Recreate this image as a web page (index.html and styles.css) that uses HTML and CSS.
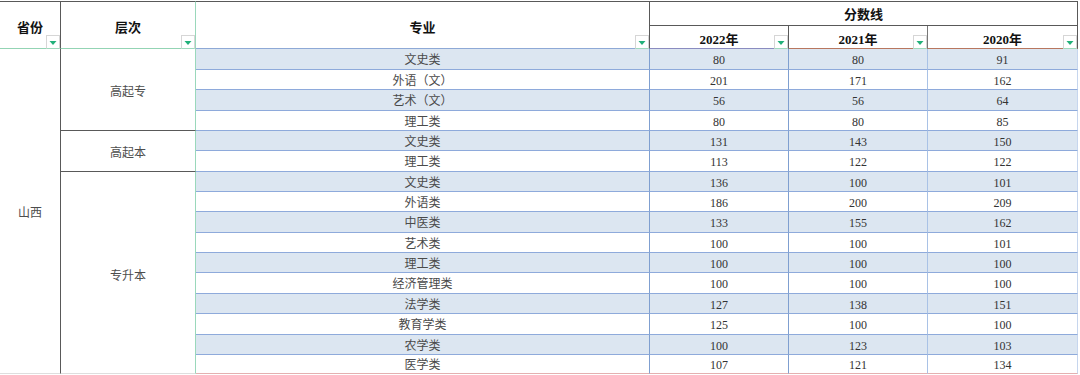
FILE: index.html
```html
<!DOCTYPE html>
<html lang="zh-CN">
<head>
<meta charset="utf-8">
<title>分数线</title>
<link rel="stylesheet" href="styles.css">
</head>
<body>
<div class="sheet">
  <div class="cell h h-prov">省份<span class="flt"><svg viewBox="0 0 12 12" width="12" height="12"><polygon points="2.5,5 9.5,5 6,9" fill="#22b07a"/></svg></span></div>
  <div class="cell h h-lvl">层次<span class="flt"><svg viewBox="0 0 12 12" width="12" height="12"><polygon points="2.5,5 9.5,5 6,9" fill="#22b07a"/></svg></span></div>
  <div class="cell h h-subj">专业<span class="flt"><svg viewBox="0 0 12 12" width="12" height="12"><polygon points="2.5,5 9.5,5 6,9" fill="#22b07a"/></svg></span></div>
  <div class="cell h h-score">分数线</div>
  <div class="cell h h-year y22">2022年<span class="flt"><svg viewBox="0 0 12 12" width="12" height="12"><polygon points="2.5,5 9.5,5 6,9" fill="#22b07a"/></svg></span></div>
  <div class="cell h h-year y21">2021年<span class="flt"><svg viewBox="0 0 12 12" width="12" height="12"><polygon points="2.5,5 9.5,5 6,9" fill="#22b07a"/></svg></span></div>
  <div class="cell h h-year y20">2020年<span class="flt"><svg viewBox="0 0 12 12" width="12" height="12"><polygon points="2.5,5 9.5,5 6,9" fill="#22b07a"/></svg></span></div>

  <div class="cell prov">山西</div>
  <div class="cell lvl span4">高起专</div>
  <div class="cell subj sh">文史类</div><div class="cell n c4 sh">80</div><div class="cell n c5 sh">80</div><div class="cell n c6 sh">91</div>
  <div class="cell subj">外语（文）</div><div class="cell n c4">201</div><div class="cell n c5">171</div><div class="cell n c6">162</div>
  <div class="cell subj sh">艺术（文）</div><div class="cell n c4 sh">56</div><div class="cell n c5 sh">56</div><div class="cell n c6 sh">64</div>
  <div class="cell subj">理工类</div><div class="cell n c4">80</div><div class="cell n c5">80</div><div class="cell n c6">85</div>
  <div class="cell lvl span2">高起本</div>
  <div class="cell subj sh">文史类</div><div class="cell n c4 sh">131</div><div class="cell n c5 sh">143</div><div class="cell n c6 sh">150</div>
  <div class="cell subj">理工类</div><div class="cell n c4">113</div><div class="cell n c5">122</div><div class="cell n c6">122</div>
  <div class="cell lvl span10 last">专升本</div>
  <div class="cell subj sh">文史类</div><div class="cell n c4 sh">136</div><div class="cell n c5 sh">100</div><div class="cell n c6 sh">101</div>
  <div class="cell subj">外语类</div><div class="cell n c4">186</div><div class="cell n c5">200</div><div class="cell n c6">209</div>
  <div class="cell subj sh">中医类</div><div class="cell n c4 sh">133</div><div class="cell n c5 sh">155</div><div class="cell n c6 sh">162</div>
  <div class="cell subj">艺术类</div><div class="cell n c4">100</div><div class="cell n c5">100</div><div class="cell n c6">101</div>
  <div class="cell subj sh">理工类</div><div class="cell n c4 sh">100</div><div class="cell n c5 sh">100</div><div class="cell n c6 sh">100</div>
  <div class="cell subj">经济管理类</div><div class="cell n c4">100</div><div class="cell n c5">100</div><div class="cell n c6">100</div>
  <div class="cell subj sh">法学类</div><div class="cell n c4 sh">127</div><div class="cell n c5 sh">138</div><div class="cell n c6 sh">151</div>
  <div class="cell subj">教育学类</div><div class="cell n c4">125</div><div class="cell n c5">100</div><div class="cell n c6">100</div>
  <div class="cell subj sh">农学类</div><div class="cell n c4 sh">100</div><div class="cell n c5 sh">123</div><div class="cell n c6 sh">103</div>
  <div class="cell subj lastrow">医学类</div><div class="cell n c4 lastrow">107</div><div class="cell n c5 lastrow">121</div><div class="cell n c6 lastrow">134</div>
</div>
</body>
</html>
```

FILE: styles.css
```css
html, body {
  margin: 0;
  padding: 0;
  background: #ffffff;
}

body {
  padding-top: 1px;
  font-family: "Liberation Serif", "Noto Sans CJK SC", serif;
  font-size: 12px;
  color: #3a3a3a;
}

.sheet {
  display: grid;
  grid-template-columns: 61px 135px 454px 139px 139px 150px;
  grid-template-rows: 25px 23px 21px 20px 21px 20px 20px 21px 20px 20px 21px 20px 20px 21px 20px 21px 20px 19px;
  width: 1078px;
}

.cell {
  box-sizing: border-box;
  display: flex;
  align-items: center;
  justify-content: center;
  position: relative;
  line-height: 14px;
  white-space: nowrap;
}

/* header */
.h {
  font-weight: bold;
  font-size: 13px;
  color: #111111;
  background: #ffffff;
}

.h-prov {
  grid-row: span 2;
  border-top: 1px solid #595959;
  border-right: 1px solid #595959;
  border-bottom: 1px solid #93d4b4;
  padding-top: 5px;
}

.h-lvl {
  grid-row: span 2;
  border-top: 1px solid #595959;
  border-right: 1px solid #9ad8bb;
  border-bottom: 1px solid #93d4b4;
  padding-top: 5px;
}

.h-subj {
  grid-row: span 2;
  border-top: 1px solid #595959;
  border-right: 1px solid #595959;
  border-bottom: 1px solid #8ea9d6;
  padding-top: 5px;
}

.h-score {
  grid-column: span 3;
  border-top: 1px solid #595959;
  border-right: 1px solid #595959;
  border-bottom: 1px solid #595959;
  padding-top: 2px;
}

.h-year {
  padding-top: 5px;
  border-right: 1px solid #595959;
}

.y22 { border-bottom: 1px solid #8a8cc0; }
.y21 { border-bottom: 1px solid #b8775f; border-right-color: #777777; }
.y20 { border-bottom: 1px solid #b8775f; }

.flt {
  position: absolute;
  right: 0;
  bottom: -1px;
  width: 14px;
  height: 14px;
  box-sizing: border-box;
  border: 1px solid #d6d6d6;
  border-bottom-color: #9ed9bc;
  background: #ffffff;
  display: flex;
  align-items: center;
  justify-content: center;
}

.flt svg {
  display: block;
}

/* body */
.prov {
  grid-row: span 16;
  border-right: 1px solid #595959;
  border-bottom: 1px solid #dedede;
  color: #4d4d4d;
  padding-top: 4px;
}

.lvl {
  border-right: 1px solid #9ad8bb;
  border-bottom: 1px solid #595959;
  color: #4d4d4d;
  padding-top: 4px;
}

.lvl.last {
  border-bottom-color: #dedede;
  padding-top: 6px;
}

.span4 { grid-row: span 4; }
.span2 { grid-row: span 2; }
.span10 { grid-row: span 10; }

.subj {
  color: #4a4a4a;
  border-right: 1px solid #7f9fd0;
  border-bottom: 1px solid #8eaadb;
  padding-top: 2px;
}

.n {
  color: #333333;
  border-bottom: 1px solid #8eaadb;
  padding-top: 2px;
}

.c4 { border-right: 1px solid #7f9fd0; }
.c5 { border-right: 1px solid #a9c2e6; }
.c6 { border-right: 1px solid #c6d6ee; }

.sh {
  background: #dce6f1;
}

.lastrow {
  border-bottom-color: #e4b0b0;
}
```
